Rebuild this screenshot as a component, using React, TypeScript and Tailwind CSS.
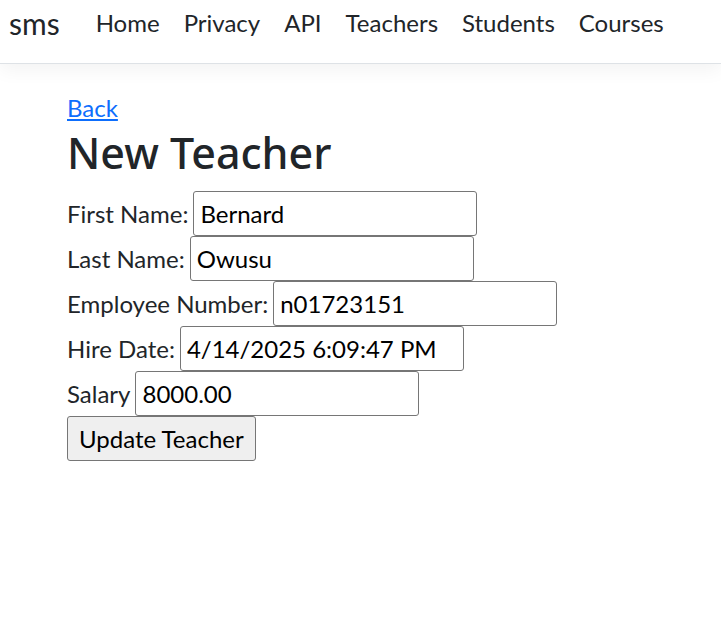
import React from "react";

const NAV_LINKS = ["Home", "Privacy", "API", "Teachers", "Students", "Courses"];

const FIELDS = [
  { label: "First Name:", value: "Bernard" },
  { label: "Last Name:", value: "Owusu" },
  { label: "Employee Number:", value: "n01723151" },
  { label: "Hire Date:", value: "4/14/2025 6:09:47 PM" },
  { label: "Salary", value: "8000.00" },
];

export default function App() {
  return (
    <div className="min-h-screen bg-white text-[#212529] [font-family:Lato,'Noto_Sans',sans-serif]">
      <header className="h-[64px] border-b border-[#dee2e6] bg-white shadow-[0_6px_18px_rgba(0,0,0,0.05)]">
        <nav className="flex h-full items-start pl-[9px] pt-[8px]">
          <a className="mr-[24px] text-[30px] leading-[30px] text-[#212529]">sms</a>
          <ul className="flex">
            {NAV_LINKS.map((l) => (
              <li key={l}>
                <a className="px-[12px] text-[24px] leading-[30px] text-[#212529]">{l}</a>
              </li>
            ))}
          </ul>
        </nav>
      </header>

      <main className="px-[67px] pt-[26px]">
        <a className="text-[24px] leading-[36px] text-[#0d6efd] underline">Back</a>
        <h1 className="mb-[12px] text-[43px] font-medium leading-[53px] [font-family:'Noto_Sans',sans-serif]">
          New Teacher
        </h1>
        <form onSubmit={(e) => e.preventDefault()}>
          {FIELDS.map((f) => (
            <div key={f.label} className="flex items-center text-[24px] leading-[36px]">
              <label className="mr-[5px]">{f.label}</label>
              <input
                defaultValue={f.value}
                className="h-[45px] w-[284px] rounded-[3px] border border-[#767676] px-[6px] text-black"
              />
            </div>
          ))}
          <button
            type="submit"
            className="h-[45px] rounded-[3px] border border-[#767676] bg-[#efefef] px-[11px] text-[24px] leading-[36px] text-black"
          >
            Update Teacher
          </button>
        </form>
      </main>
    </div>
  );
}
